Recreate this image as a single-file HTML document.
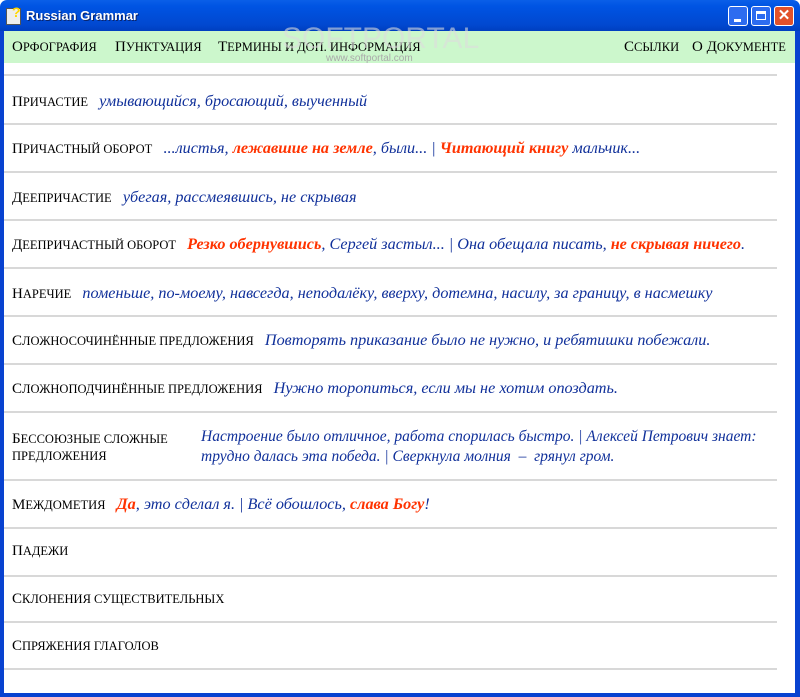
<!DOCTYPE html><html><head><meta charset="utf-8"><style>
body{margin:0;width:800px;height:697px;position:relative;overflow:hidden;background:#fff;font-family:"Liberation Serif","DejaVu Serif",serif}
.tb{position:absolute;left:0;top:0;width:800px;height:31px;background:linear-gradient(#0a5fe8,#0054e3 20%,#0148d0 80%,#003fbf);border-radius:7px 7px 0 0}
.tt{position:absolute;left:26px;top:8px;color:#fff;font:bold 13px "Liberation Sans",sans-serif;text-shadow:1px 1px #0a246a}
.bl{position:absolute;left:0;top:31px;width:4px;height:666px;background:#0842d0}
.br{position:absolute;right:0;top:31px;width:5px;height:666px;background:#0842d0}
.bb{position:absolute;left:0;bottom:0;width:800px;height:4px;background:#0842d0}
.btn{position:absolute;top:6px;width:20px;height:20px;border:1px solid #fff;border-radius:3px;background:#2d6cf0;box-sizing:border-box}
.menu{position:absolute;left:4px;top:31px;width:791px;height:32px;background:#ccf7cc;font-size:12.5px;text-transform:uppercase}
.menu>span{position:absolute;top:8px;white-space:nowrap}
.hr{position:absolute;left:4px;width:773px;height:2px;background:#d8d8d8}
.r{position:absolute;left:12px;font-size:12.5px;white-space:nowrap}
.l{text-transform:uppercase;margin-right:8px}
.b{font-size:15px}
.e{font-style:italic;color:#10309a;font-size:16.2px}
.x{color:#ff3300;font-weight:bold}
</style></head><body>
<div class="tb"><div style="position:absolute;left:6px;top:8px;width:13px;height:15px;background:#eee;border:1px solid #555"></div><div style="position:absolute;left:12px;top:4px;color:#ffd800;font:bold 14px 'Liberation Sans'">?</div>
<div class="tt">Russian Grammar</div>
<div class="btn" style="left:728px"><div style="position:absolute;left:5px;top:12px;width:7px;height:3px;background:#fff"></div></div>
<div class="btn" style="left:751px"><div style="position:absolute;left:4px;top:4px;width:10px;height:9px;border:1px solid #fff;border-top-width:3px;box-sizing:border-box"></div></div>
<div class="btn" style="left:774px;background:#e2512a;color:#fff;font:bold 15px 'Liberation Sans';text-align:center;line-height:18px">✕</div></div>
<div class="bl"></div><div class="br"></div><div class="bb"></div>
<div class="menu"><span style="left:8px"><span class="b">О</span>рфография</span><span style="left:111px"><span class="b">П</span>унктуация</span><span style="left:214px"><span class="b">Т</span>ермины и доп. информация</span><span style="left:620px"><span class="b">С</span>сылки</span><span style="left:688px"><span class="b">О Д</span>окументе</span></div>
<div style="position:absolute;left:282px;top:22px;color:#ddd;font:30px 'Liberation Sans';opacity:.6">SOFTPORTAL</div>
<div style="position:absolute;left:326px;top:53px;color:#aaa;font:10px 'Liberation Sans'">www.softportal.com</div>
<div class="hr" style="top:74px"></div><div class="hr" style="top:123px"></div><div class="hr" style="top:171px"></div><div class="hr" style="top:219px"></div><div class="hr" style="top:267px"></div><div class="hr" style="top:315px"></div><div class="hr" style="top:363px"></div><div class="hr" style="top:411px"></div><div class="hr" style="top:479px"></div><div class="hr" style="top:527px"></div><div class="hr" style="top:575px"></div><div class="hr" style="top:621px"></div><div class="hr" style="top:668px"></div>
<div class="r" style="top:92px"><span class="l"><span class="b">П</span>ричастие</span> <span class="e">умывающийся, бросающий, выученный</span></div>
<div class="r" style="top:139px"><span class="l"><span class="b">П</span>ричастный оборот</span> <span class="e">...листья, <span class="x">лежавшие на земле</span>, были... | <span class="x">Читающий книгу</span> мальчик...</span></div>
<div class="r" style="top:188px"><span class="l"><span class="b">Д</span>еепричастие</span> <span class="e">убегая, рассмеявшись, не скрывая</span></div>
<div class="r" style="top:235px"><span class="l"><span class="b">Д</span>еепричастный оборот</span> <span class="e"><span class="x">Резко обернувшись</span>, Сергей застыл... | Она обещала писать, <span class="x">не скрывая ничего</span>.</span></div>
<div class="r" style="top:284px"><span class="l"><span class="b">Н</span>аречие</span> <span class="e">поменьше, по-моему, навсегда, неподалёку, вверху, дотемна, насилу, за границу, в насмешку</span></div>
<div class="r" style="top:331px"><span class="l"><span class="b">С</span>ложносочинённые предложения</span> <span class="e">Повторять приказание было не нужно, и ребятишки побежали.</span></div>
<div class="r" style="top:379px"><span class="l"><span class="b">С</span>ложноподчинённые предложения</span> <span class="e">Нужно торопиться, если мы не хотим опоздать.</span></div>
<div class="r" style="top:431px;line-height:17px;text-transform:uppercase"><span class="b">Б</span>ессоюзные сложные<br>предложения</div>
<div class="r" style="left:201px;top:427px;line-height:20px"><span class="e" style="font-size:15.5px">Настроение было отличное, работа спорилась быстро. | Алексей Петрович знает:<br>трудно далась эта победа. | Сверкнула молния &nbsp;– &nbsp;грянул гром.</span></div>
<div class="r" style="top:495px"><span class="l"><span class="b">М</span>еждометия</span> <span class="e"><span class="x">Да</span>, это сделал я. | Всё обошлось, <span class="x">слава Богу</span>!</span></div>
<div class="r" style="top:543px;text-transform:uppercase"><span class="b">П</span>адежи</div>
<div class="r" style="top:591px;text-transform:uppercase"><span class="b">С</span>клонения существительных</div>
<div class="r" style="top:638px;text-transform:uppercase"><span class="b">С</span>пряжения глаголов</div>
</body></html>
